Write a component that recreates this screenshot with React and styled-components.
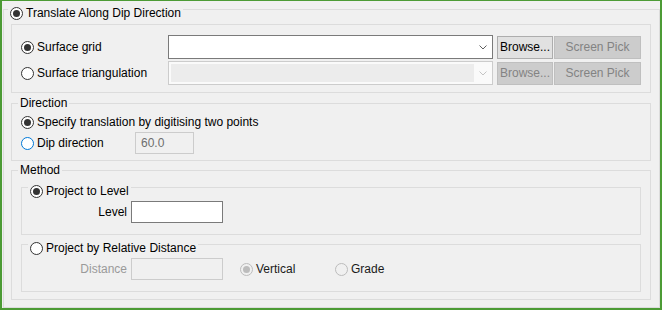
import React from "react";
import styled, { createGlobalStyle } from "styled-components";

const GlobalStyle = createGlobalStyle`
  html, body {
    margin: 0;
    padding: 0;
    background: #f0f0f0;
  }
  body {
    font-family: "Liberation Sans", Arial, sans-serif;
    font-size: 12px;
    color: #000;
  }
`;

const Window = styled.div`
  width: 662px;
  height: 310px;
  box-sizing: border-box;
  border: solid #4c9b35;
  border-width: 1px 2px 2px 2px;
  background: #f0f0f0;
  overflow: hidden;
`;

const Group = styled.fieldset`
  margin: ${(p) => p.$margin || "0"};
  padding: ${(p) => p.$padding || "0"};
  border: 1px solid #dcdcdc;
  min-width: 0;
`;

const Legend = styled.legend`
  margin-left: -3px;
  padding: ${(p) => (p.$radio ? "7px 2px 0" : "0 2px")};
  line-height: 16px;
  color: #000;
`;

const Option = styled.label`
  display: flex;
  align-items: center;
  flex: none;
  height: 16px;
  line-height: 16px;
  white-space: nowrap;
  width: ${(p) => (p.$width ? `${p.$width}px` : "auto")};
  color: ${(p) => (p.$muted ? "#1a1a1a" : "#000")};
`;

const Circle = styled.span`
  flex: none;
  width: 13px;
  height: 13px;
  box-sizing: border-box;
  border-radius: 50%;
  margin-right: 3px;
  border: 1px solid
    ${(p) => (p.$disabled ? "#bcbcbc" : p.$focus ? "#0078d7" : "#333333")};
  background: ${(p) => (p.$disabled ? "#f0f0f0" : "#fff")};
  display: flex;
  align-items: center;
  justify-content: center;

  &::after {
    content: "";
    display: ${(p) => (p.$checked ? "block" : "none")};
    width: 7px;
    height: 7px;
    border-radius: 50%;
    background: ${(p) => (p.$disabled ? "#bcbcbc" : "#333333")};
  }
`;

const Row = styled.div`
  display: flex;
  align-items: center;
  height: ${(p) => p.$h || 16}px;
  margin-top: ${(p) => p.$mt || 0}px;
`;

const Combo = styled.div`
  flex: 1;
  height: 24px;
  box-sizing: border-box;
  display: flex;
  border: 1px solid ${(p) => (p.$disabled ? "#cccccc" : "#7a7a7a")};
  background: ${(p) => (p.$disabled ? "#fafafa" : "#fff")};
`;

const ComboField = styled.div`
  flex: 1;
  margin: 2px 0 2px 2px;
  background: ${(p) => (p.$disabled ? "#ececec" : "transparent")};
`;

const ComboArrow = styled.div`
  width: 18px;
  display: flex;
  align-items: center;
  justify-content: center;
  color: ${(p) => (p.$disabled ? "#c4c4c4" : "#606060")};
`;

const Button = styled.button`
  flex: none;
  width: ${(p) => p.$w}px;
  height: 23px;
  margin-left: ${(p) => p.$ml || 0}px;
  padding: 0;
  box-sizing: border-box;
  font: inherit;
  border: 1px solid ${(p) => (p.disabled ? "#bfbfbf" : "#adadad")};
  background: ${(p) => (p.disabled ? "#cccccc" : "#e1e1e1")};
  color: ${(p) => (p.disabled ? "#838383" : "#000")};
`;

const TextBox = styled.input`
  flex: none;
  width: ${(p) => p.$w}px;
  height: 22px;
  box-sizing: border-box;
  margin: 0;
  padding: 0 0 0 5px;
  font: inherit;
  outline: none;
  border: 1px solid ${(p) => (p.$disabled ? "#cccccc" : "#7a7a7a")};
  background: ${(p) => (p.$disabled ? "#f0f0f0" : "#fff")};
  color: #6d6d6d;
`;

const FieldLabel = styled.span`
  flex: none;
  width: ${(p) => p.$w}px;
  margin-right: 4px;
  text-align: right;
  color: ${(p) => (p.$disabled ? "#9a9a9a" : "#000")};
`;

const Radio = ({ label, checked, disabled, focus, width }) => (
  <Option $width={width} $muted={disabled}>
    <Circle $checked={checked} $disabled={disabled} $focus={focus} />
    {label}
  </Option>
);

const Chevron = () => (
  <svg width="8" height="5" viewBox="0 0 8 5">
    <polyline
      points="0.5,0.5 4,4 7.5,0.5"
      fill="none"
      stroke="currentColor"
      strokeWidth="1"
    />
  </svg>
);

const SurfaceRow = ({ label, checked, disabled, mt }) => (
  <Row $h={24} $mt={mt}>
    <Radio label={label} checked={checked} width={147} />
    <Combo $disabled={disabled}>
      <ComboField $disabled={disabled} />
      <ComboArrow $disabled={disabled}>
        <Chevron />
      </ComboArrow>
    </Combo>
    <Button $w={56} $ml={4} disabled={disabled}>
      Browse...
    </Button>
    <Button $w={87} $ml={1} disabled>
      Screen Pick
    </Button>
  </Row>
);

export default function App() {
  return (
    <>
      <GlobalStyle />
      <Window>
        <Group $margin="-3px 0 0 1px" $padding="3px 8px 7px 7px">
          <Legend $radio>
            <Radio label="Translate Along Dip Direction" checked />
          </Legend>

          <Group $padding="10px 9px 7px 9px">
            <SurfaceRow label="Surface grid" checked />
            <SurfaceRow label="Surface triangulation" disabled mt={2} />
          </Group>

          <Group $margin="2px 0 0 0" $padding="3px 9px 6px 9px">
            <Legend>Direction</Legend>
            <Row>
              <Radio label="Specify translation by digitising two points" checked />
            </Row>
            <Row $h={22} $mt={2}>
              <Radio label="Dip direction" focus width={114} />
              <TextBox $w={59} $disabled readOnly value="60.0" />
            </Row>
          </Group>

          <Group $margin="1px 0 0 0" $padding="0 9px 7px 9px">
            <Legend>Method</Legend>

            <Group $margin="-2px 0 0 0" $padding="2px 9px 11px 9px">
              <Legend $radio>
                <Radio label="Project to Level" checked />
              </Legend>
              <Row $h={22}>
                <FieldLabel $w={96}>Level</FieldLabel>
                <TextBox $w={92} readOnly value="" />
              </Row>
            </Group>

            <Group $margin="-2px 0 0 0" $padding="2px 9px 11px 9px">
              <Legend $radio>
                <Radio label="Project by Relative Distance" />
              </Legend>
              <Row $h={22}>
                <FieldLabel $w={96} $disabled>
                  Distance
                </FieldLabel>
                <TextBox $w={92} $disabled readOnly value="" />
                <Row $h={22} style={{ marginLeft: 17 }}>
                  <Radio label="Vertical" checked disabled width={95} />
                  <Radio label="Grade" disabled />
                </Row>
              </Row>
            </Group>
          </Group>
        </Group>
      </Window>
    </>
  );
}
